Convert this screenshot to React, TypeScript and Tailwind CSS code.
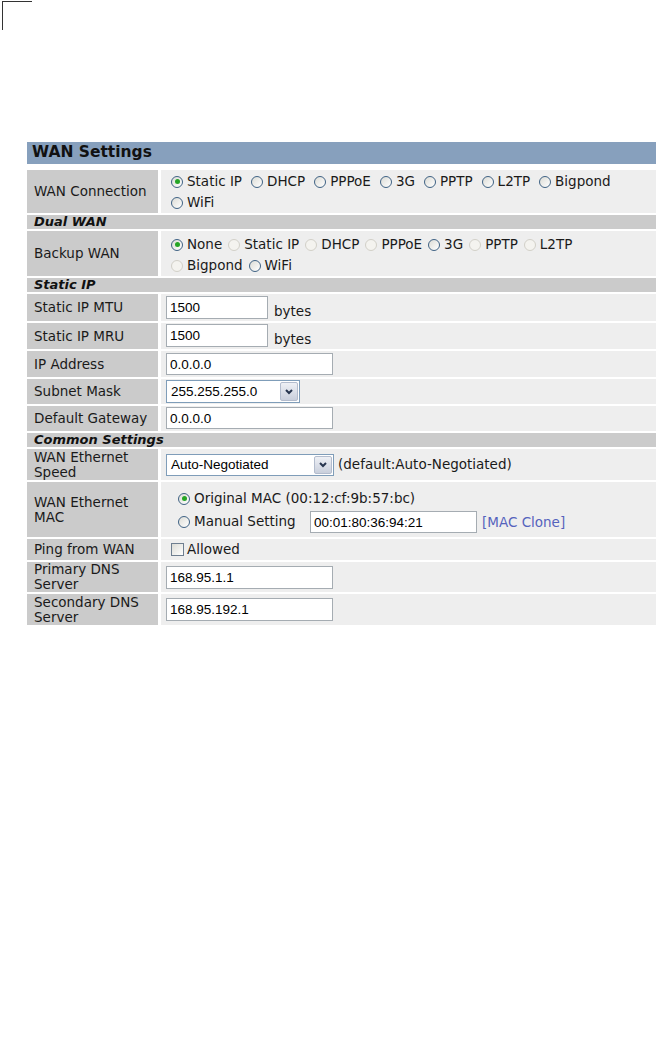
import React from 'react'

type RadioProps = { checked?: boolean; disabled?: boolean }

function Radio({ checked = false, disabled = false }: RadioProps) {
  return (
    <span
      className={`flex h-3 w-3 shrink-0 items-center justify-center rounded-full border ${
        disabled
          ? 'border-[#d2d0c8] bg-[#f4f3ef]'
          : 'border-[#3f6284] bg-linear-to-br from-[#dcdcd6] to-white'
      }`}
    >
      {checked && <span className="h-[5px] w-[5px] rounded-full bg-[#25a525]" />}
    </span>
  )
}

function Option({ label, checked, disabled }: { label: string } & RadioProps) {
  return (
    <span className="inline-flex h-[21px] items-center gap-[4px] leading-[15px]">
      <Radio checked={checked} disabled={disabled} />
      <span>{label}</span>
    </span>
  )
}

function TextInput({ value, w, h }: { value: string; w: string; h: string }) {
  return (
    <input
      type="text"
      readOnly
      value={value}
      className={`${w} ${h} border border-[#a5acb2] bg-white px-[3px] font-['Liberation_Sans',Arial,sans-serif] text-[13.5px] text-black outline-none`}
    />
  )
}

function FakeSelect({ value, w, h }: { value: string; w: string; h: string }) {
  return (
    <div
      className={`${w} ${h} flex items-center border border-[#7f9db9] bg-white py-[1px] pl-[4px] pr-[1px] font-['Liberation_Sans',Arial,sans-serif] text-[13.5px] text-black`}
    >
      <span className="flex-1 leading-[15px]">{value}</span>
      <span className="flex h-full w-[18px] items-center justify-center rounded-[2px] border border-[#b3bccd] bg-linear-to-b from-[#eef0f5] to-[#c9cfdc]">
        <svg width="8" height="6" viewBox="0 0 8 6">
          <polyline points="1,1 4,4 7,1" fill="none" stroke="#27354f" strokeWidth="2" />
        </svg>
      </span>
    </div>
  )
}

function Row({
  label,
  h,
  className = '',
  children,
}: {
  label: React.ReactNode
  h: string
  className?: string
  children?: React.ReactNode
}) {
  return (
    <>
      <div className={`${h} flex items-center bg-[#cbcbcb] pl-[7px] leading-[15px]`}>{label}</div>
      <div className={`${h} bg-[#eeeeee] ${className}`}>{children}</div>
    </>
  )
}

function Section({ title }: { title: string }) {
  return (
    <div className="col-span-2 h-[14px] bg-[#cbcbcb] pl-[7px] text-[13px] font-bold italic leading-[14px] text-[#111]">
      {title}
    </div>
  )
}

export default function App() {
  return (
    <div className="min-h-[1054px] w-[657px] bg-white font-['DejaVu_Sans',Verdana,sans-serif] text-[13.5px] text-[#1a1a1a]">
      <div className="ml-[2px] mt-[1px] h-[29px] w-[30px] border-l border-t border-[#333]" />

      <div className="ml-[27px] mt-[112px] w-[629px]">
        <div className="mb-[6px] flex h-[22px] items-center bg-[#87a0bd] pl-[5px] text-[15.5px] font-bold text-[#111]">
          WAN Settings
        </div>

        <div className="grid grid-cols-[131px_1fr] gap-x-[3px] gap-y-[2px]">
          <Row label="WAN Connection" h="h-[43px]" className="flex flex-col pl-[10px] pt-[1px]">
            <div className="flex gap-x-[9px]">
              <Option label="Static IP" checked />
              <Option label="DHCP" />
              <Option label="PPPoE" />
              <Option label="3G" />
              <Option label="PPTP" />
              <Option label="L2TP" />
              <Option label="Bigpond" />
            </div>
            <div className="flex">
              <Option label="WiFi" />
            </div>
          </Row>

          <Section title="Dual WAN" />
          <Row label="Backup WAN" h="h-[45px]" className="flex flex-col pl-[10px] pt-[3px]">
            <div className="flex gap-x-[6px]">
              <Option label="None" checked />
              <Option label="Static IP" disabled />
              <Option label="DHCP" disabled />
              <Option label="PPPoE" disabled />
              <Option label="3G" />
              <Option label="PPTP" disabled />
              <Option label="L2TP" disabled />
            </div>
            <div className="flex gap-x-[6px]">
              <Option label="Bigpond" disabled />
              <Option label="WiFi" />
            </div>
          </Row>

          <Section title="Static IP" />
          <Row label="Static IP MTU" h="h-[27px]" className="flex items-start pl-[5px] pt-[2px]">
            <TextInput value="1500" w="w-[102px]" h="h-[23px]" />
            <span className="ml-[6px] mt-[8px] leading-[15px]">bytes</span>
          </Row>
          <Row label="Static IP MRU" h="h-[26px]" className="flex items-start pl-[5px] pt-[1px]">
            <TextInput value="1500" w="w-[102px]" h="h-[23px]" />
            <span className="ml-[6px] mt-[8px] leading-[15px]">bytes</span>
          </Row>
          <Row label="IP Address" h="h-[26px]" className="flex items-start pl-[5px] pt-[2px]">
            <TextInput value="0.0.0.0" w="w-[167px]" h="h-[22px]" />
          </Row>
          <Row label="Subnet Mask" h="h-[25px]" className="flex items-start pl-[5px] pt-[1px]">
            <FakeSelect value="255.255.255.0" w="w-[134px]" h="h-[23px]" />
          </Row>
          <Row label="Default Gateway" h="h-[25px]" className="flex items-start pl-[5px] pt-[1px]">
            <TextInput value="0.0.0.0" w="w-[167px]" h="h-[22px]" />
          </Row>

          <Section title="Common Settings" />
          <Row
            label={
              <span>
                WAN Ethernet
                <br />
                Speed
              </span>
            }
            h="h-[31px]"
            className="flex items-center pl-[5px]"
          >
            <FakeSelect value="Auto-Negotiated" w="w-[168px]" h="h-[22px]" />
            <span className="ml-[4px] leading-[15px]">(default:Auto-Negotiated)</span>
          </Row>
          <Row
            label={
              <span>
                WAN Ethernet
                <br />
                MAC
              </span>
            }
            h="h-[55px]"
            className="flex flex-col pl-[17px] pt-[5px]"
          >
            <div className="flex h-[23px] items-center">
              <Option label="Original MAC (00:12:cf:9b:57:bc)" checked />
            </div>
            <div className="flex h-[24px] items-center">
              <div className="w-[132px]">
                <Option label="Manual Setting" />
              </div>
              <TextInput value="00:01:80:36:94:21" w="w-[167px]" h="h-[22px]" />
              <span className="ml-[5px] leading-[15px] text-[#5563bd]">[MAC Clone]</span>
            </div>
          </Row>
          <Row label="Ping from WAN" h="h-[21px]" className="flex items-center pl-[10px]">
            <span className="h-[13px] w-[13px] border border-[#6e7e90] bg-linear-to-br from-[#dcdcd6] to-white" />
            <span className="ml-[3px] leading-[15px]">Allowed</span>
          </Row>
          <Row
            label={
              <span>
                Primary DNS
                <br />
                Server
              </span>
            }
            h="h-[30px]"
            className="flex items-center pl-[5px]"
          >
            <TextInput value="168.95.1.1" w="w-[167px]" h="h-[23px]" />
          </Row>
          <Row
            label={
              <span>
                Secondary DNS
                <br />
                Server
              </span>
            }
            h="h-[31px]"
            className="flex items-center pl-[5px]"
          >
            <TextInput value="168.95.192.1" w="w-[167px]" h="h-[23px]" />
          </Row>
        </div>
      </div>
    </div>
  )
}
